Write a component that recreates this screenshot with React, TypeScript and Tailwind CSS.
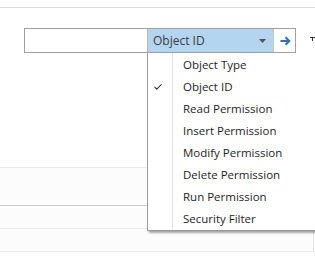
import { Check } from "lucide-react";

const items = [
  "Object Type",
  "Object ID",
  "Read Permission",
  "Insert Permission",
  "Modify Permission",
  "Delete Permission",
  "Run Permission",
  "Security Filter",
];

export default function App() {
  return (
    <div
      className="relative w-[315px] h-[259px] overflow-hidden bg-white text-[11.5px]"
      style={{ fontFamily: '"Segoe UI", "Open Sans", "Noto Sans", sans-serif' }}
    >
      {/* top rule */}
      <div className="h-[7px]" />
      <div className="h-px bg-[#dcdcdc]" />

      {/* search bar */}
      <div className="flex items-start pt-[20px]">
        <div className="ml-[24px] flex h-[25px] w-[275px] border border-[#a0a0a0]">
          <div className="w-[122px]" />
          <div className="flex w-[126px] items-center border-l border-[#b8b8b8] bg-[#b4d5f0] pl-[5px] pr-[7px] text-[#3c3c3c] text-[12px]">
            <span className="flex-1 leading-none">Object ID</span>
            <svg width="7" height="4" viewBox="0 0 7 4">
              <path d="M0 0h7L3.5 4z" fill="#555" />
            </svg>
          </div>
          <div className="flex flex-1 items-center justify-center border-l border-[#c8c8c8]">
            <svg width="11" height="10" viewBox="0 0 11 10" className="ml-[1px]">
              <path d="M0.5 5h8.5M5.5 1.2 9.3 5 5.5 8.8" stroke="#2e6fb7" strokeWidth="2" fill="none" />
            </svg>
          </div>
        </div>
        <div className="ml-[14px] mt-[9px] flex flex-col items-center">
          <div className="h-px w-[5px] bg-[#333]" />
          <div className="h-[3px] w-px bg-[#333]" />
        </div>
      </div>

      {/* background rows */}
      <div className="mt-[114px] h-px bg-[#ebebeb]" />
      <div className="h-[37px] bg-[#fcfcfc]" />
      <div className="h-px bg-[#cdcdcd]" />
      <div className="h-[22px] bg-[#fcfcfc]" />
      <div className="h-px bg-[#ebebeb]" />
      <div className="flex h-[22px] justify-end bg-[#fcfcfc]">
        <div className="mr-[1px] w-px bg-[#e6e6e6]" />
      </div>
      <div className="h-px bg-[#ebebeb]" />

      {/* dropdown menu */}
      <div className="absolute left-[147px] top-[53px] w-[190px] border-l border-b border-[#9a9a9a] bg-white shadow-[2px_2px_2px_rgba(0,0,0,0.35)]">
        <div className="flex">
          <div className="w-[25px] border-r border-[#e2e2e2] pt-[1px]">
            {items.map((it) => (
              <div key={it} className="flex h-[22px] items-center justify-center">
                {it === "Object ID" && <Check size={10} strokeWidth={2.5} className="text-[#222] -ml-[4px]" />}
              </div>
            ))}
          </div>
          <div className="pl-[10px] pt-[1px] text-[#1e1e1e]">
            {items.map((it) => (
              <div key={it} className="flex h-[22px] items-center whitespace-nowrap">
                {it}
              </div>
            ))}
          </div>
        </div>
      </div>
    </div>
  );
}
